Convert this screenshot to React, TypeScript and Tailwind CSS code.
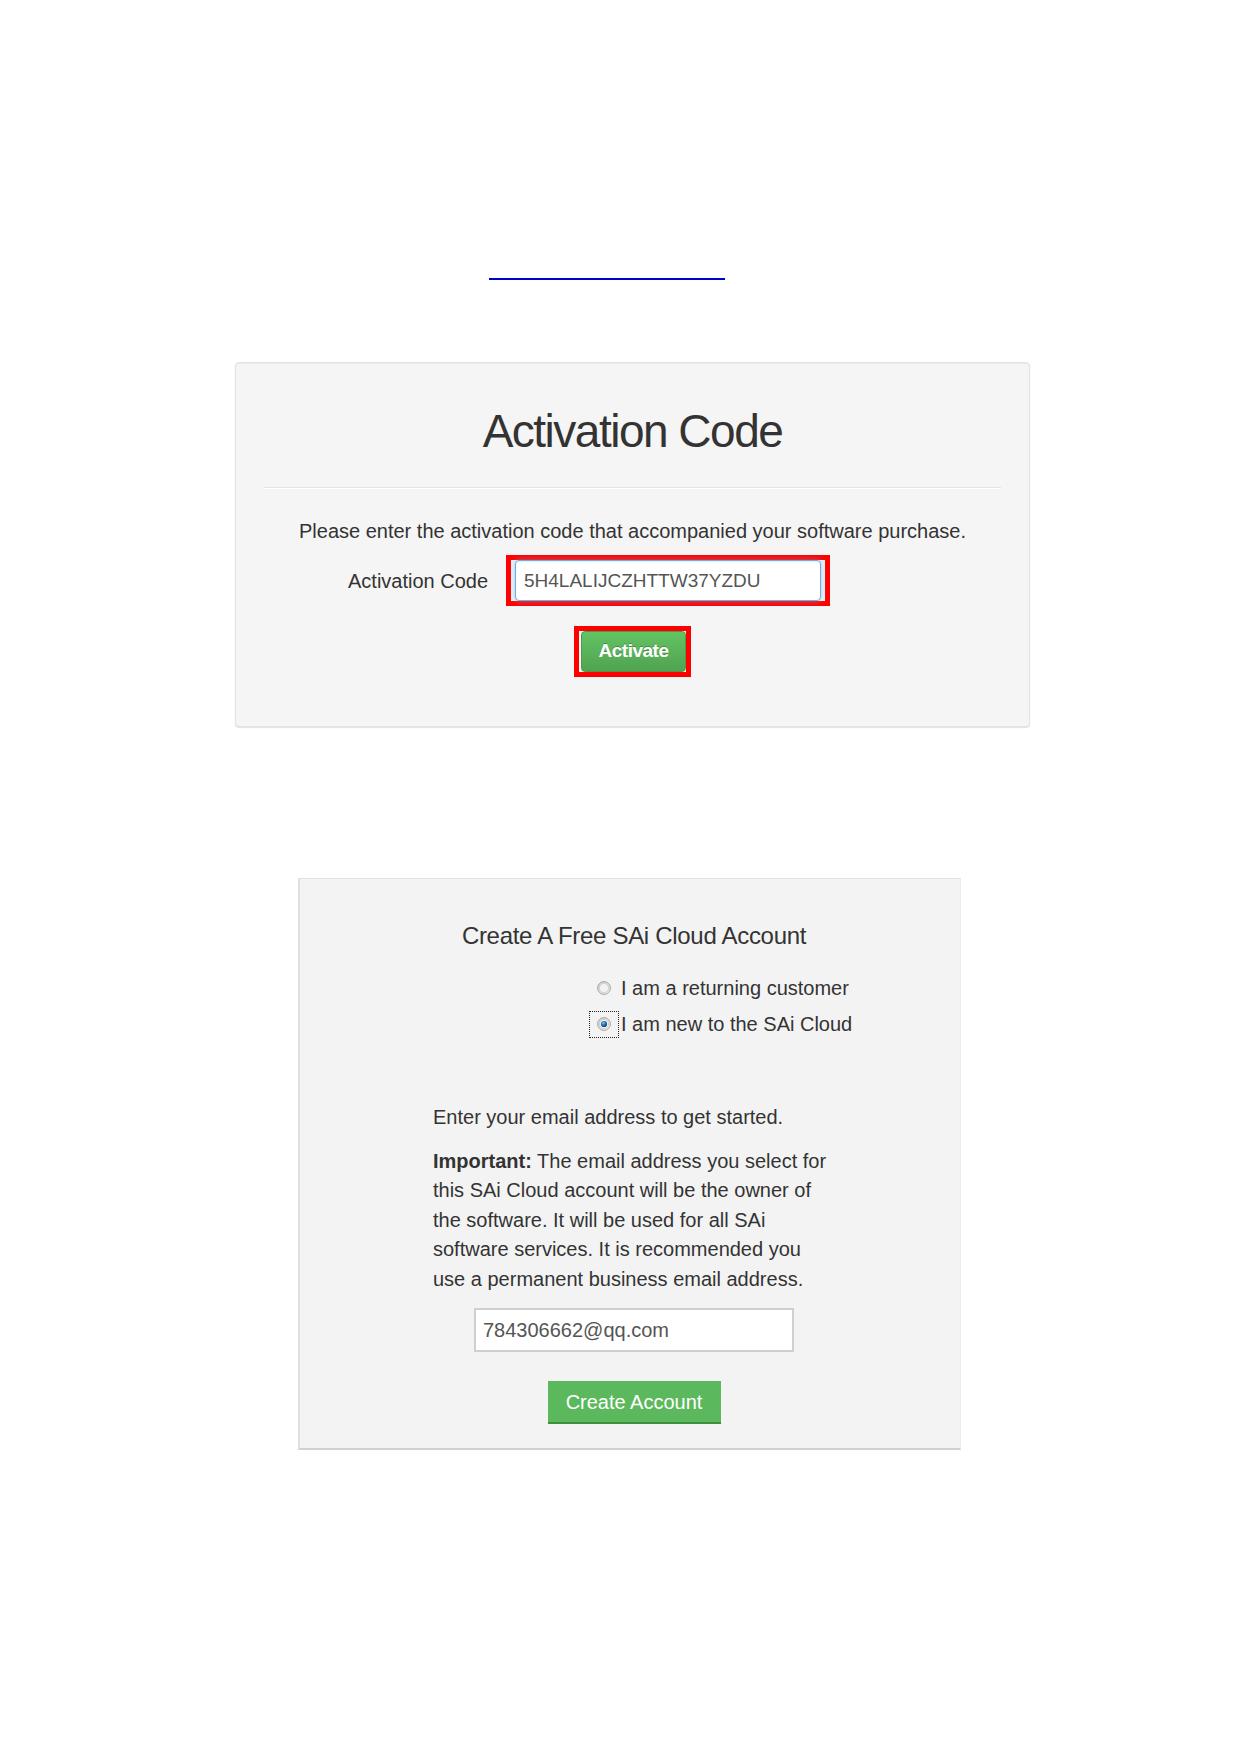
import React from "react";

// old-style OS radio button, drawn because the native one renders differently
function Radio({ checked }: { checked?: boolean }) {
  const id = checked ? "radio-on" : "radio-off";
  return (
    <svg width="14" height="14" viewBox="0 0 14 14" aria-hidden="true">
      <defs>
        <linearGradient id={`${id}-ring`} x1="0" y1="0" x2="1" y2="1">
          <stop offset="0" stopColor="#cfcfcf" />
          <stop offset="1" stopColor="#f7f7f7" />
        </linearGradient>
        <radialGradient id={`${id}-dot`} cx="0.4" cy="0.35" r="0.7">
          <stop offset="0" stopColor="#8cc8f2" />
          <stop offset="0.45" stopColor="#2279c0" />
          <stop offset="1" stopColor="#0a355e" />
        </radialGradient>
      </defs>
      <circle cx="7" cy="7" r="6.4" fill={`url(#${id}-ring)`} stroke="#a3a3a3" strokeWidth="1" />
      <circle cx="7" cy="7" r="4.6" fill="#f2f2f2" stroke="#c9c9c9" strokeWidth="0.8" />
      {checked && <circle cx="7" cy="7" r="3.1" fill={`url(#${id}-dot)`} />}
    </svg>
  );
}

function RadioRow({ label, checked }: { label: string; checked?: boolean }) {
  return (
    <div className="flex h-[36px] items-center">
      <div
        className={`flex h-[27px] w-[30px] items-center justify-center border border-dotted ${
          checked ? "border-[#222]" : "border-transparent"
        }`}
      >
        <Radio checked={checked} />
      </div>
      <span className="ml-[2px] whitespace-nowrap text-[20px] leading-[28px]">{label}</span>
    </div>
  );
}

export default function App() {
  return (
    <div className="min-h-[1754px] w-[1240px] bg-white font-['Liberation_Sans',Arial,sans-serif] text-[#333]">
      {/* empty link underline */}
      <div className="pl-[489px] pt-[278px]">
        <div className="h-[2px] w-[236px] bg-[#0000cc]" />
      </div>

      {/* activation well */}
      <section className="ml-[235px] mt-[82px] h-[365px] w-[795px] rounded-[4px] border border-[#e3e3e3] bg-[#f5f5f5] shadow-[inset_0_1px_1px_rgba(0,0,0,0.05),0_1px_1px_rgba(0,0,0,0.12)]">
        <h1 className="pt-[45px] text-center text-[46px] font-normal leading-[46px] tracking-[-1.5px]">
          Activation Code
        </h1>
        <div className="mx-[28px] mt-[33px] border-b border-t border-b-white border-t-[#e4e4e4]" />
        <p className="mt-[28px] text-center text-[20px] leading-[28px]">
          Please enter the activation code that accompanied your software purchase.
        </p>

        <div className="mt-[10px] flex items-center pl-[112px]">
          <span className="w-[138px] whitespace-nowrap text-[20px] leading-[28px]">Activation Code</span>
          <div className="ml-[20px] border-[5px] border-[#ff0000] px-[4px]">
            <input
              readOnly
              value="5H4LALIJCZHTTW37YZDU"
              className="block h-[41px] w-[306px] rounded-[4px] border border-[#66afe9] bg-white px-[8px] text-[19px] text-[#555] shadow-[inset_0_1px_1px_rgba(0,0,0,0.075),0_0_6px_rgba(102,175,233,0.6)] outline-none"
            />
          </div>
        </div>

        <div className="mt-[20px] flex justify-center">
          <div className="border-[5px] border-[#ff0000] pl-[2px]">
            <button
              type="button"
              className="block h-[41px] w-[105px] rounded-[4px] border border-[#4a9a4a] bg-linear-to-b from-[#62c462] to-[#51a351] text-[19px] font-bold tracking-[-0.5px] text-white [text-shadow:0_-1px_0_rgba(0,0,0,0.25)]"
            >
              Activate
            </button>
          </div>
        </div>
      </section>

      {/* cloud account panel */}
      <section className="ml-[298px] mt-[151px] h-[572px] w-[663px] border-b-2 border-l-2 border-r border-t border-b-[#d0d0d0] border-l-[#e0e0e0] border-r-[#ececec] border-t-[#e2e2e2] bg-[#f3f3f3] pl-[8px]">
        <h2 className="pt-[42px] text-center text-[24px] font-normal leading-[30px] tracking-[-0.3px]">
          Create A Free SAi Cloud Account
        </h2>

        <div className="ml-[281px] mt-[19px]">
          <RadioRow label="I am a returning customer" />
          <RadioRow label="I am new to the SAi Cloud" checked />
        </div>

        <p className="ml-[125px] mt-[61px] text-[20px] leading-[29px]">Enter your email address to get started.</p>
        <p className="ml-[125px] mt-[15px] whitespace-nowrap text-[20px] leading-[29.4px]">
          <b>Important:</b> The email address you select for
          <br />
          this SAi Cloud account will be the owner of
          <br />
          the software. It will be used for all SAi
          <br />
          software services. It is recommended you
          <br />
          use a permanent business email address.
        </p>

        <input
          readOnly
          value="784306662@qq.com"
          className="mx-auto mt-[14px] block h-[44px] w-[320px] border-2 border-[#cfcfcf] bg-white px-[7px] text-[20px] text-[#555] outline-none"
        />

        <button
          type="button"
          className="mx-auto mt-[29px] block h-[43px] w-[173px] border-b-2 border-[#3e8f3e] bg-[#5cb85c] text-[20px] text-white"
        >
          Create Account
        </button>
      </section>
    </div>
  );
}
